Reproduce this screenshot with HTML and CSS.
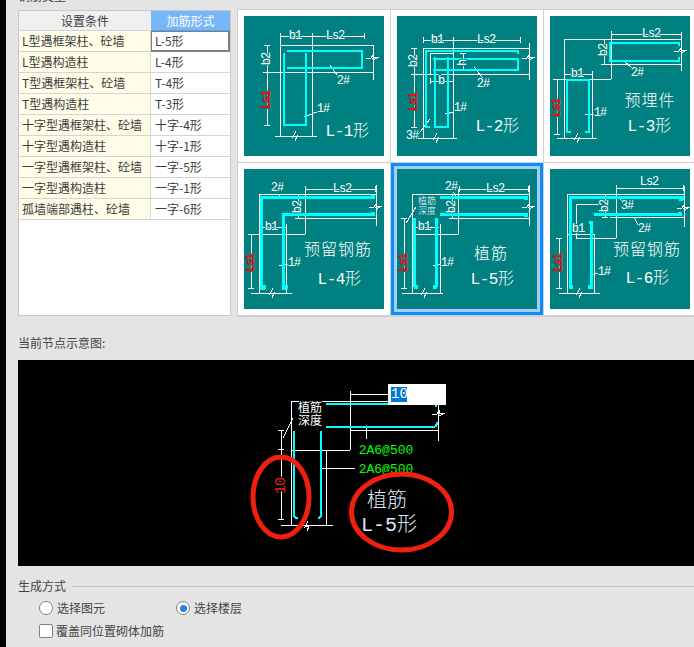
FILE: index.html
```html
<!DOCTYPE html>
<html lang="zh-CN">
<head>
  <meta charset="utf-8">
  <title>砌体加筋</title>
  <link rel="stylesheet" href="styles.css">
</head>
<body>
<div class="page">
  <div class="edge"></div>
  <div class="content">
    <div class="group-title"><span>钢筋类型</span></div>

    <div class="top">
      <div class="table-box">
        <table class="cond">
          <tr class="head"><th>设置条件</th><th class="on">加筋形式</th></tr>
          <tr><td>L型遇框架柱、砼墙</td><td class="cur">L-5形</td></tr>
          <tr><td>L型遇构造柱</td><td>L-4形</td></tr>
          <tr><td>T型遇框架柱、砼墙</td><td>T-4形</td></tr>
          <tr><td>T型遇构造柱</td><td>T-3形</td></tr>
          <tr><td>十字型遇框架柱、砼墙</td><td>十字-4形</td></tr>
          <tr><td>十字型遇构造柱</td><td>十字-1形</td></tr>
          <tr><td>一字型遇框架柱、砼墙</td><td>一字-5形</td></tr>
          <tr><td>一字型遇构造柱</td><td>一字-1形</td></tr>
          <tr><td>孤墙端部遇柱、砼墙</td><td>一字-6形</td></tr>
        </table>
      </div>

      <div class="thumbs">
        <!-- L-1 -->
        <div class="cell">
          <svg class="thumb" viewBox="0 0 140 140">
            <defs>
              <path id="brk-v" d="M1 -5 L-2 1 L2 0 L0 5"/>
              <path id="brk-h" d="M-6 1 H-1 L2 -3 L1 1 L7 0 L1 3"/>
            </defs>
            <path class="ln" d="M36 20H120M36 17V23M68 17V23M120 17V23M36 29H129V64M36 20V120M68 20V120M19 56H129M23 29V109M20 29H26M20 56H26M20 109H26M31 120H73"/>
            <use class="ln" href="#brk-v" x="51" y="120"/>
            <use class="ln" href="#brk-h" x="128" y="41"/>
            <path class="ln" d="M86 49L93 59M60 101L73 96"/>
            <path class="rb" d="M40 37V109H62V37M43 35H118V52H43"/>
            <text class="dim" x="51" y="20">b1</text>
            <text class="dim" x="91" y="20">Ls2</text>
            <text class="dim" x="23" y="43" transform="rotate(-90 23 43)">b2</text>
            <text class="dim red" x="23" y="84" transform="rotate(-90 23 84)">Ls1</text>
            <text class="dim" x="99" y="65">2#</text>
            <text class="dim" x="79" y="93">1#</text>
            <text class="name" x="103" y="116">L-1形</text>
          </svg>
        </div>
        <!-- L-2 -->
        <div class="cell">
          <svg class="thumb" viewBox="0 0 140 140">
            <path class="ln" d="M26 24H123M26 21V27M56 21V27M123 21V27M26 32H132M26 32V122M56 24V122M14 58H132M132 27V64M33 37V58M33 37H56M17 32V111M14 32H20M14 58H20M14 111H20M20 122H60M33 65H56M33 62V68M56 62V68M66 37V54M63 37H69M63 54H69"/>
            <use class="ln" href="#brk-v" x="39" y="122"/>
            <use class="ln" href="#brk-h" x="131" y="41"/>
            <path class="ln" d="M77 51L87 64M48 98L57 96M21 119L33 103"/>
            <path class="rb" d="M33 111H29V35H121V38M36 43H121V54H36M38 41V111H51V41"/>
            <text class="dim" x="40" y="24">b1</text>
            <text class="dim" x="89" y="24">Ls2</text>
            <text class="dim" x="17" y="45" transform="rotate(-90 17 45)">b2</text>
            <text class="dim red" x="17" y="86" transform="rotate(-90 17 86)">Ls1</text>
            <text class="dim" x="44" y="65">b</text>
            <text class="dim" x="66" y="47" transform="rotate(-90 66 47)">h</text>
            <text class="dim" x="86" y="68">2#</text>
            <text class="dim" x="63" y="92">1#</text>
            <text class="dim" x="15" y="120">3#</text>
            <text class="name" x="100" y="111">L-2形</text>
          </svg>
        </div>
        <!-- L-3 -->
        <div class="cell">
          <svg class="thumb" viewBox="0 0 140 140">
            <path class="ln" d="M61 18H131M61 15V21M131 16V55M14 23H131M14 23V122M3 63H61M61 18V63M52 48H131M54 23V48M51 23H57M51 48H57M15 58H42M42 55V122M7 63V118M4 118H10M7 122H47"/>
            <use class="ln" href="#brk-v" x="27" y="122"/>
            <use class="ln" href="#brk-h" x="130" y="34"/>
            <path class="ln" d="M74 45L82 52M35 99L44 98"/>
            <path class="rb" d="M129 30V27H60V45H129V41M21 116H17V64H39V116H35"/>
            <text class="dim" x="27" y="58">b1</text>
            <text class="dim" x="101" y="18">Ls2</text>
            <text class="dim" x="54" y="34" transform="rotate(-90 54 34)">b2</text>
            <text class="dim red" x="7" y="92" transform="rotate(-90 7 92)">Ls1</text>
            <text class="dim" x="87" y="57">2#</text>
            <text class="dim" x="50" y="97">1#</text>
            <text class="cn" x="100" y="86">预埋件</text>
            <text class="name" x="99" y="111">L-3形</text>
          </svg>
        </div>
        <!-- L-4 -->
        <div class="cell">
          <svg class="thumb" viewBox="0 0 140 140">
            <path class="ln" d="M61 20H131M61 17V23M131 17V23M15 25H132M15 25V124M61 20V65M5 65H61M52 49H132M132 16V57M54 25V49M51 25H57M51 49H57M15 58H42M42 55V124M7 65V119M4 65H10M4 119H10M7 124H48"/>
            <use class="ln" href="#brk-v" x="28" y="124"/>
            <use class="ln" href="#brk-h" x="131" y="37"/>
            <path class="ln" d="M35 26L40 30M35 97L44 95"/>
            <path class="rb thick" d="M130 28H17V119H21M130 45H39V119H42"/>
            <rect class="blk" x="127" y="26" width="4" height="4"/>
            <rect class="blk" x="127" y="43" width="4" height="4"/>
            <rect class="blk" x="18" y="116" width="4" height="4"/>
            <rect class="blk" x="40" y="116" width="4" height="4"/>
            <text class="dim" x="33" y="19">2#</text>
            <text class="dim" x="27" y="58">b1</text>
            <text class="dim" x="98" y="20">Ls2</text>
            <text class="dim" x="54" y="38" transform="rotate(-90 54 38)">b2</text>
            <text class="dim red" x="7" y="94" transform="rotate(-90 7 94)">Ls1</text>
            <text class="dim" x="50" y="94">1#</text>
            <text class="cn" x="94" y="82">预留钢筋</text>
            <text class="name" x="95" y="111">L-4形</text>
          </svg>
        </div>
        <!-- L-5 -->
        <div class="cell cell-on">
          <svg class="thumb" viewBox="0 0 140 140">
            <path class="ln" d="M62 20H131M62 17V23M131 17V23M15 25H132M15 25V124M61 20V65M15 65H61M52 49H132M132 16V57M55 25V49M52 25H58M52 49H58M16 58H42M43 55V124M7 49V119M4 49H10M4 119H10M5 124H46"/>
            <use class="ln" href="#brk-v" x="27" y="124"/>
            <use class="ln" href="#brk-h" x="131" y="37"/>
            <path class="ln" d="M19 38L9 54M36 97L44 95M56 23L60 28"/>
            <path class="rb thick" d="M43 28H129M43 45H129M17 49V118M39 49V118"/>
            <rect class="blk" x="127" y="27" width="4" height="4"/>
            <rect class="blk" x="127" y="44" width="4" height="4"/>
            <rect class="blk" x="17" y="116" width="4" height="4"/>
            <rect class="blk" x="36" y="116" width="4" height="4"/>
            <text class="dim" x="54" y="18">2#</text>
            <text class="dim" x="27" y="58">b1</text>
            <text class="dim" x="98" y="20">Ls2</text>
            <text class="dim" x="55" y="38" transform="rotate(-90 55 38)">b2</text>
            <text class="dim red" x="7" y="94" transform="rotate(-90 7 94)">Ls1</text>
            <text class="dim" x="50" y="94">1#</text>
            <text class="cn-sm" x="30" y="33">植筋</text>
            <text class="cn-sm" x="30" y="43">深度</text>
            <text class="cn" x="94" y="86">植筋</text>
            <text class="name" x="95" y="111">L-5形</text>
          </svg>
        </div>
        <!-- L-6 -->
        <div class="cell">
          <svg class="thumb" viewBox="0 0 140 140">
            <path class="ln" d="M66 19H133M66 16V22M133 16V22M17 25H134M17 25V124M134 17V58M66 19V69M17 65H44M26 69H66M26 35V69M26 35H50M60 48H134M55 25V48M52 25H58M52 48H58M44 65V124M9 69V119M6 69H12M6 119H12M9 124H50"/>
            <use class="ln" href="#brk-v" x="29" y="124"/>
            <use class="ln" href="#brk-h" x="133" y="38"/>
            <path class="ln" d="M70 29L73 34M84 48L88 56M42 106L48 104"/>
            <path class="rb thick" d="M132 31V28H20V118M44 45H132M39 53H41V118H39"/>
            <rect class="blk" x="129" y="28" width="4" height="4"/>
            <rect class="blk" x="128" y="43" width="4" height="4"/>
            <rect class="blk" x="19" y="116" width="4" height="4"/>
            <rect class="blk" x="38" y="116" width="4" height="4"/>
            <text class="dim" x="77" y="37">3#</text>
            <text class="dim" x="94" y="60">2#</text>
            <text class="dim" x="54" y="103">1#</text>
            <text class="dim" x="28" y="60">b1</text>
            <text class="dim" x="99" y="13">Ls2</text>
            <text class="dim" x="55" y="37" transform="rotate(-90 55 37)">b2</text>
            <text class="dim red" x="9" y="94" transform="rotate(-90 9 94)">Ls1</text>
            <text class="cn" x="97" y="82">预留钢筋</text>
            <text class="name" x="97" y="110">L-6形</text>
          </svg>
        </div>
      </div>
    </div>

    <div class="section-label">当前节点示意图:</div>

    <div class="canvas">
      <svg class="canvas-svg" viewBox="18 360 676 206">
        <path class="ln" d="M291 401H438M291 401V525M350 394H388M350 391V450M291 450H350M326 450V525M281 525H333M350 430H438M438 398V441M366 427V439M281 430V519M278 430H284M278 449H284M278 519H284M322 468H355"/>
        <use class="ln" href="#brk-v" x="307" y="526"/>
        <use class="ln" href="#brk-h" x="438" y="413"/>
        <path class="ln" d="M293 418L283 438"/>
        <path class="rb" d="M326 404H436V407M326 427H433Q437 427 437 422M294 431V514Q294 518 298 518M321 431V514Q321 518 318 518"/>
        <text class="cad-sm" x="310" y="409">植筋</text>
        <text class="cad-sm" x="310" y="422">深度</text>
        <text class="steel" x="386" y="450">2A6@500</text>
        <text class="steel" x="386" y="469">2A6@500</text>
        <text class="len" x="281" y="486" transform="rotate(-90 281 486)">10</text>
        <text class="cad-lg" x="387" y="501">植筋</text>
        <text class="cad-lg" x="389" y="525">L-5形</text>
        <ellipse class="mark" cx="281" cy="497" rx="28" ry="40"/>
        <ellipse class="mark" cx="401.500" cy="512" rx="50" ry="38"/>
      </svg>
      <div class="len-input"><span>10</span></div>
    </div>

    <div class="legend"><span>生成方式</span></div>
    <div class="opts">
      <label class="opt opt-wide"><span class="radio"></span>选择图元</label>
      <label class="opt"><span class="radio radio-on"></span>选择楼层</label>
    </div>
    <div class="opts opts-last">
      <label class="opt"><span class="check"></span>覆盖同位置砌体加筋</label>
    </div>
  </div>
</div>
</body>
</html>
```

FILE: styles.css
```css
* { box-sizing: border-box; }
html, body { margin: 0; height: 100%; overflow: hidden; }
body {
  background: #e4e4e4;
  color: #444;
  font-family: "Noto Sans CJK SC", "Liberation Sans", sans-serif;
  font-size: 12px;
}
.page { display: flex; width: 694px; height: 647px; overflow: hidden; }
.edge { flex: 0 0 6px; background: #000; }
.content { flex: 1; min-width: 0; padding-left: 12px; }

/* clipped group title at the very top */
.group-title { height: 9px; overflow: hidden; }
.group-title span { display: block; margin-top: -13px; line-height: 18px; }

.top { display: flex; align-items: flex-start; gap: 6px; height: 308px; }

/* condition table */
.table-box {
  flex: 0 0 213px;
  height: 306px;
  margin-top: 1px;
  background: #fff;
  border: 1px solid #c8c8c8;
}
.cond { width: 211px; border-collapse: separate; border-spacing: 0; table-layout: fixed; color: #3c3c3c; }
.cond th {
  height: 20px;
  padding: 0;
  background: #efefef;
  border-bottom: 1px solid #d2d2d2;
  font-weight: normal;
  line-height: 19px;
  text-align: center;
  width: 132px;
}
.cond th.on { width: 79px; background: #78b6fc; color: #fff; border-bottom-color: #5a9fe8; }
.cond td {
  height: 21px;
  padding: 0 0 0 3px;
  background: #fffde8;
  border-bottom: 1px solid #d4d4d4;
  border-right: 1px solid #d4d4d4;
  line-height: 20px;
  white-space: nowrap;
}
.cond td + td { padding-left: 4px; background: #fff; border-right: 0; }
.cond td.cur { padding-left: 3px; border: 1px solid #808080; border-width: 1px 2px 2px 1px; line-height: 18px; }

/* picture grid */
.thumbs {
  flex: 0 0 auto;
  display: grid;
  grid-template-columns: repeat(3, 152px);
  grid-auto-rows: 152px;
  gap: 1px;
  background: #d0d0d0;
  border: 1px solid #cfcfcf;
  border-width: 1px 0 2px 1px;
}
.cell { padding: 6px; background: #fff; }
.cell-on { padding: 3px; background: #a4cdf8; border: 3px solid #0a8cff; }
.thumb { display: block; width: 140px; height: 140px; background: #008080; overflow: hidden; }

/* drawing text and lines */
.ln { fill: none; stroke: #fff; stroke-width: 1; shape-rendering: crispEdges; }
.rb { fill: none; stroke: #0ff; stroke-width: 2; shape-rendering: crispEdges; }
.rb.thick { stroke-width: 3; }
.blk { fill: #0ff; }
.dim {
  fill: #fff;
  font-family: "Liberation Mono", monospace;
  font-size: 12px;
  letter-spacing: -1px;
  text-anchor: middle;
  dominant-baseline: central;
  paint-order: stroke;
  stroke: #008080;
  stroke-width: 2px;
}
.dim.red { fill: #f00; font-weight: bold; }
.name, .cn, .cn-sm {
  fill: #fff;
  text-anchor: middle;
  dominant-baseline: central;
  font-family: "Liberation Mono", "Noto Sans CJK SC", monospace;
  font-weight: 300;
}
.name { font-size: 16px; letter-spacing: -0.500px; }
.cn { font-size: 16px; letter-spacing: 1px; }
.cn-sm { font-size: 9px; paint-order: stroke; stroke: #008080; stroke-width: 2px; }

.section-label { margin: 18px 0 9px; line-height: 16px; }

/* black preview */
.canvas { position: relative; height: 206px; background: #000; }
.canvas-svg { display: block; width: 676px; height: 206px; }
.cad-sm, .cad-lg, .steel, .len {
  text-anchor: middle;
  dominant-baseline: central;
  font-family: "Liberation Mono", "Noto Sans CJK SC", monospace;
}
.cad-sm { fill: #fff; font-size: 12px; paint-order: stroke; stroke: #000; stroke-width: 2px; }
.cad-lg { fill: #dfe8f4; font-size: 20px; font-weight: 300; }
.steel { fill: #0f0; font-size: 13px; }
.len { fill: #e02020; font-size: 15px; letter-spacing: -1px; paint-order: stroke; stroke: #000; stroke-width: 3px; }
.mark { fill: none; stroke: #f0200f; stroke-width: 5; }
.len-input {
  position: absolute;
  left: 370px;
  top: 24px;
  width: 58px;
  height: 21px;
  padding: 3px 0 0 3px;
  background: #fff;
  font-family: "Liberation Mono", monospace;
  font-size: 14px;
  line-height: 15px;
}
.len-input span { display: block; width: 16px; background: #0078d7; color: #fff; }

/* generation options */
.legend { display: flex; align-items: center; gap: 6px; margin-top: 12px; line-height: 16px; }
.legend::after { content: ""; flex: 1; height: 1px; background: #c4c4c4; }
.opts { display: flex; margin-top: 6px; padding-left: 21px; line-height: 16px; }
.opts-last { margin-top: 7px; }
.opt { display: flex; align-items: center; gap: 4px; }
.opt-wide { flex: 0 0 137px; }
.radio, .check { flex: none; width: 14px; height: 14px; background: #fff; border: 1px solid #808080; }
.radio { display: flex; align-items: center; justify-content: center; border-radius: 50%; }
.radio-on::after { content: ""; width: 7px; height: 7px; border-radius: 50%; background: #2a7fe0; }
.check { border-radius: 2px; margin-right: -1px; }
```
